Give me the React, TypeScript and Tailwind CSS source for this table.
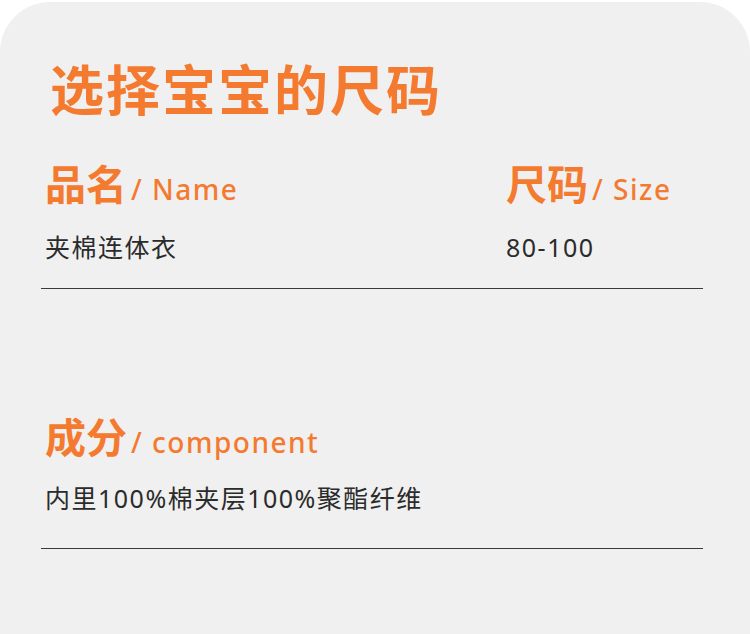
import React from "react";

const font = { fontFamily: '"Noto Sans", "Noto Sans CJK SC", sans-serif' };

export default function App() {
  return (
    <div className="w-[750px] h-[634px] bg-white overflow-hidden" style={font}>
      <div className="mt-[2px] h-[632px] bg-[#f0f0f0] rounded-t-[50px] pt-[61px]">
        <div className="pl-[50px] text-[54px] leading-[54px] font-bold tracking-[2px] text-[#f47a30]">
          选择宝宝的尺码
        </div>

        <div className="mt-[47px] flex pl-[45px]">
          <div className="w-[461px] flex flex-col">
            <div className="flex items-baseline text-[#f47a30]">
              <span className="text-[41px] leading-[40px] font-bold">品名</span>
              <span className="ml-[4px] text-[28px] leading-[40px] font-medium tracking-[1.5px]">/ Name</span>
            </div>
            <div className="mt-[26px] text-[25px] leading-[24px] tracking-[1.5px] text-[#2b2b2b]">夹棉连体衣</div>
          </div>
          <div className="flex flex-col">
            <div className="flex items-baseline text-[#f47a30]">
              <span className="text-[41px] leading-[40px] font-bold">尺码</span>
              <span className="ml-[4px] text-[28px] leading-[40px] font-medium tracking-[1.5px]">/ Size</span>
            </div>
            <div className="mt-[26px] text-[25px] leading-[24px] tracking-[1.5px] text-[#2b2b2b]">80-100</div>
          </div>
        </div>

        <div className="mt-[29px] ml-[41px] w-[662px] border-t border-[#3a3a3a]" />

        <div className="mt-[128px] pl-[45px] flex flex-col">
          <div className="flex items-baseline text-[#f47a30]">
            <span className="text-[41px] leading-[40px] font-bold">成分</span>
            <span className="ml-[4px] text-[28px] leading-[40px] font-medium tracking-[1.5px]">/ component</span>
          </div>
          <div className="mt-[24px] text-[25px] leading-[24px] tracking-[1.5px] text-[#2b2b2b]">
            内里100%棉夹层100%聚酯纤维
          </div>
        </div>

        <div className="mt-[38px] ml-[41px] w-[662px] border-t border-[#3a3a3a]" />
      </div>
    </div>
  );
}
